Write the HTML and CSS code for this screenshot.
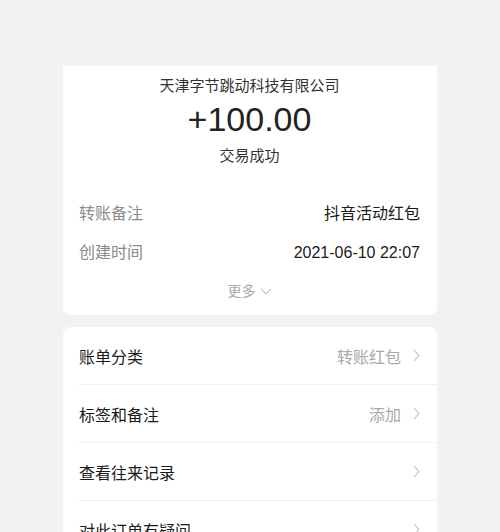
FILE: index.html
```html
<!DOCTYPE html>
<html>
<head>
    <meta charset="utf-8">
    <link rel="stylesheet" href="styles.css">
</head>
<body>
    <div class="page">
        <div class="card summary">
            <div class="payee">天津字节跳动科技有限公司</div>
            <div class="amount">+100.00</div>
            <div class="status">交易成功</div>
            <div class="info info-first">
                <span class="info-label">转账备注</span>
                <span class="info-value">抖音活动红包</span>
            </div>
            <div class="info">
                <span class="info-label">创建时间</span>
                <span class="info-value">2021-06-10 22:07</span>
            </div>
            <div class="more">
                更多
                <svg width="12" height="7" viewBox="0 0 12 7"><path d="M1 1 L6 6 L11 1" fill="none" stroke="#c4c4c4" stroke-width="1.2"/></svg>
            </div>
        </div>
        <div class="card menu">
            <div class="item">
                <span class="item-label">账单分类</span>
                <span class="item-value">转账红包</span>
                <svg class="arrow" width="7" height="13" viewBox="0 0 7 13"><path d="M1 1 L6 6.5 L1 12" fill="none" stroke="#cccccc" stroke-width="1.2"/></svg>
            </div>
            <div class="item">
                <span class="item-label">标签和备注</span>
                <span class="item-value">添加</span>
                <svg class="arrow" width="7" height="13" viewBox="0 0 7 13"><path d="M1 1 L6 6.5 L1 12" fill="none" stroke="#cccccc" stroke-width="1.2"/></svg>
            </div>
            <div class="item">
                <span class="item-label">查看往来记录</span>
                <span class="item-value"></span>
                <svg class="arrow" width="7" height="13" viewBox="0 0 7 13"><path d="M1 1 L6 6.5 L1 12" fill="none" stroke="#cccccc" stroke-width="1.2"/></svg>
            </div>
            <div class="item">
                <span class="item-label">对此订单有疑问</span>
                <span class="item-value"></span>
                <svg class="arrow" width="7" height="13" viewBox="0 0 7 13"><path d="M1 1 L6 6.5 L1 12" fill="none" stroke="#cccccc" stroke-width="1.2"/></svg>
            </div>
        </div>
    </div>
</body>
</html>
```

FILE: styles.css
```css
body {
    margin: 0;
    padding: 0;
    background-color: #f2f2f2;
    font-family: "Liberation Sans", "Noto Sans CJK SC", sans-serif;
    color: #1a1a1a;
    height: 532px;
    overflow: hidden;
}
.page {
    width: 374px;
    margin: 0 auto;
    padding-top: 66px;
    display: flex;
    flex-direction: column;
    gap: 12px;
}
.card {
    background-color: #ffffff;
    border-radius: 8px;
}
.summary {
    border-radius: 0 0 8px 8px;
    padding: 9px 17px 14px 16px;
    display: flex;
    flex-direction: column;
}
.payee {
    text-align: center;
    font-size: 15px;
    line-height: 22px;
    color: #333;
}
.amount {
    text-align: center;
    font-size: 34px;
    line-height: 44px;
    color: #222;
}
.status {
    text-align: center;
    font-size: 15px;
    line-height: 22px;
    margin-top: 4px;
    color: #333;
}
.info {
    display: flex;
    justify-content: space-between;
    font-size: 16px;
    line-height: 24px;
    margin-top: 15px;
}
.info-first {
    margin-top: 35px;
}
.info-label {
    color: #8a8a8a;
}
.info-value {
    color: #1a1a1a;
}
.more {
    margin-top: 16px;
    display: flex;
    justify-content: center;
    align-items: center;
    gap: 4px;
    font-size: 14px;
    line-height: 20px;
    color: #aaa;
}
.menu {
    padding-left: 16px;
}
.item {
    height: 57px;
    display: flex;
    align-items: center;
    padding-right: 17px;
    border-bottom: 1px solid #f0f0f0;
    font-size: 16px;
}
.item-label {
    flex: 1;
    color: #1a1a1a;
}
.item-value {
    color: #a8a8a8;
    margin-right: 12px;
}
```
